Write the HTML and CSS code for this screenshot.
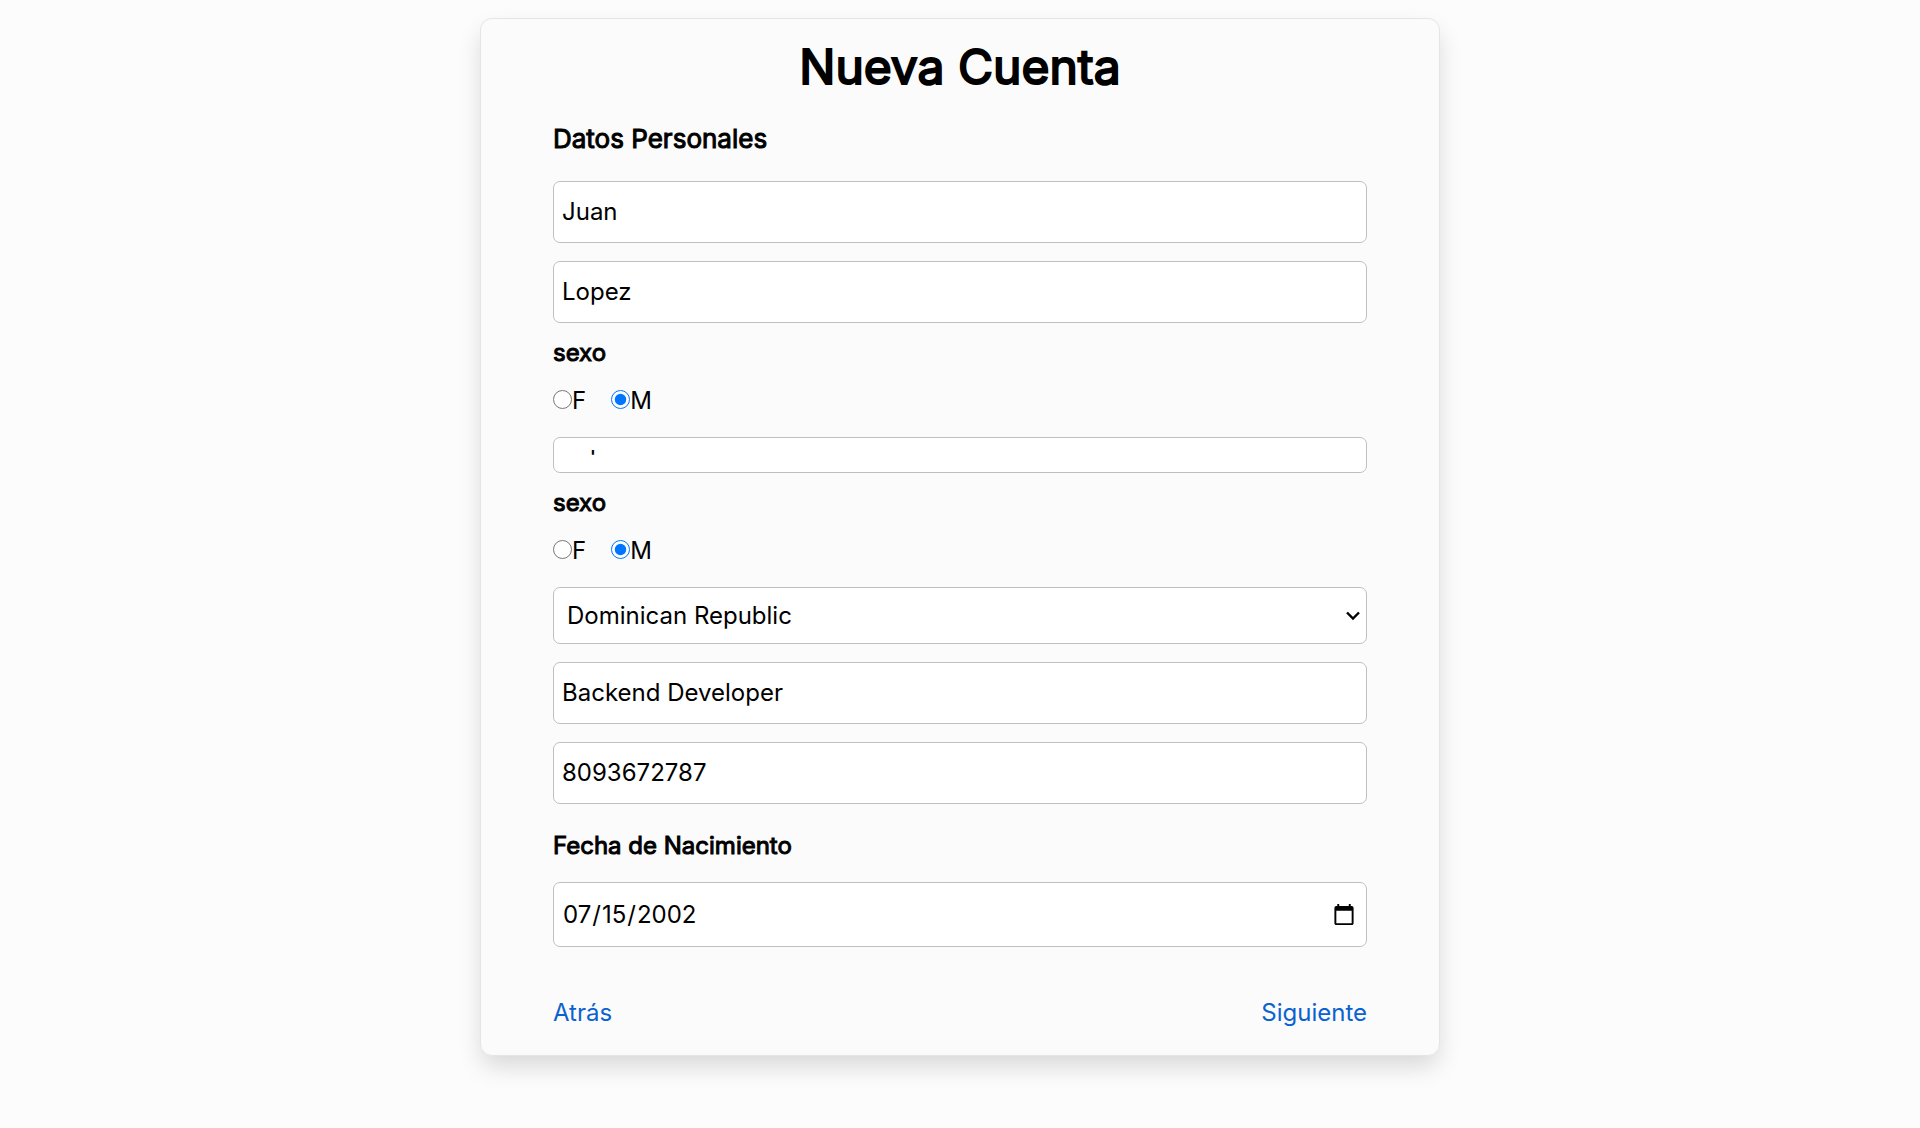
FILE: index.html
```html
<!DOCTYPE html>
<html lang="es">
<head>
<meta charset="utf-8">
<meta name="viewport" content="width=device-width, initial-scale=1">
<title>Nueva Cuenta</title>
<link rel="stylesheet" href="styles.css">
</head>
<body>
<main class="card">
  <h1 class="title">Nueva Cuenta</h1>
  <form class="form">
    <h2 class="subtitle">Datos Personales</h2>
    <input class="field" type="text" aria-label="Nombre" value="Juan">
    <input class="field" type="text" aria-label="Apellido" value="Lopez">
    <fieldset class="group">
      <legend class="label">sexo</legend>
      <div class="options">
        <label class="option"><input class="radio" type="radio" name="sexo">F</label>
        <label class="option"><input class="radio" type="radio" name="sexo" checked>M</label>
      </div>
    </fieldset>
    <div class="field-short">
      <div class="field-clip">
        <input class="field-bare" type="text" aria-label="Segundo apellido" value="Lopez">
      </div>
    </div>
    <fieldset class="group">
      <legend class="label">sexo</legend>
      <div class="options">
        <label class="option"><input class="radio" type="radio" name="sexo2">F</label>
        <label class="option"><input class="radio" type="radio" name="sexo2" checked>M</label>
      </div>
    </fieldset>
    <select class="field field-select" aria-label="País">
      <option>Dominican Republic</option>
    </select>
    <input class="field" type="text" aria-label="Ocupación" value="Backend Developer">
    <input class="field" type="tel" aria-label="Teléfono" value="8093672787">
    <label class="label label-date" for="nacimiento">Fecha de Nacimiento</label>
    <input class="field field-date" id="nacimiento" type="date" value="2002-07-15">
  </form>
  <nav class="steps">
    <a class="link" href="#atras">Atrás</a>
    <a class="link" href="#siguiente">Siguiente</a>
  </nav>
</main>
</body>
</html>
```
FILE: styles.css
```css
* {
  box-sizing: border-box;
}

body {
  min-height: 100vh;
  margin: 0;
  padding: 18px;
  background: #fcfcfc;
  color: #000;
  font: 24px/30px Inter, sans-serif;
}

.card {
  width: 50vw;
  min-width: 480px;
  margin: 0 auto;
  padding: 18px 72px 27px;
  border: 1px solid #e5e5e5;
  border-radius: 12px;
  background: #fbfbfb;
  box-shadow: 0 12px 24px -2px rgba(0, 0, 0, 0.15);
}

.title {
  margin: 0 0 24px;
  font-size: 48px;
  line-height: 60px;
  font-weight: 400;
  text-align: center;
  -webkit-text-stroke: 2px #000;
}

.form {
  display: flex;
  flex-direction: column;
  gap: 18px;
}

.subtitle {
  margin: 0 0 6px;
  font-size: 26px;
  line-height: 36px;
  font-weight: 400;
  -webkit-text-stroke: 1px #000;
}

.field,
.field-short {
  width: 100%;
  border: 1px solid #bfbfbf;
  border-radius: 7px;
  background: #fff;
}

.field {
  height: 62px;
  padding: 0 8px 2px;
  color: #000;
  font: inherit;
}

.field-select {
  height: 57px;
  padding: 0 30px 0 13px;
  appearance: none;
  background: #fff url("data:image/svg+xml,%3Csvg xmlns='http://www.w3.org/2000/svg' width='14' height='10' viewBox='0 0 14 10'%3E%3Cpath d='M1 1.5l6 6 6-6' fill='none' stroke='%23000' stroke-width='2.4'/%3E%3C/svg%3E") no-repeat right 6px center;
}

.field-date {
  height: 65px;
  padding: 0 8px;
}

.field-short {
  height: 36px;
  padding: 12px 8px;
}

.field-clip {
  display: flex;
  align-items: flex-end;
  height: 5px;
  overflow: hidden;
}

.field-bare {
  flex: 1;
  height: 27px;
  padding: 0;
  border: 0;
  background: none;
  color: #000;
  font: inherit;
}

.group {
  margin: 0;
  padding: 0;
  border: 0;
}

.label {
  padding: 0;
  line-height: 24px;
  -webkit-text-stroke: 1px #000;
}

.options {
  display: flex;
  gap: 25px;
  padding: 21px 0 3px;
}

.option {
  display: flex;
  align-items: center;
}

.radio {
  width: 19px;
  height: 19px;
  margin: 0 0 4px;
}

.label-date {
  padding: 9px 0 3px;
  line-height: 30px;
}

.steps {
  display: flex;
  justify-content: space-between;
  padding-top: 51px;
}

.link {
  color: #0a62d0;
  text-decoration: none;
}
```
